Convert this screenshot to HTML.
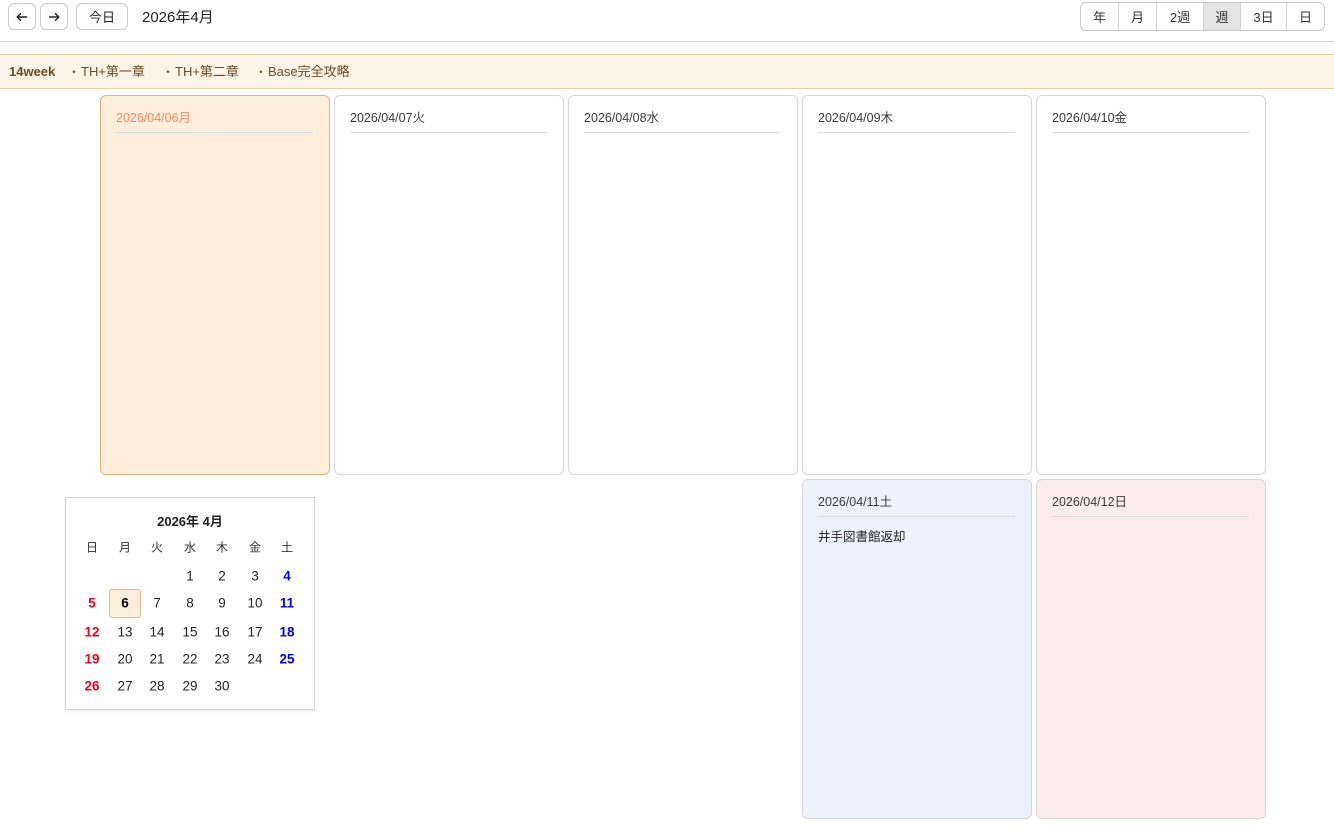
<!DOCTYPE html><html><head><meta charset="utf-8"><style>
*{box-sizing:border-box;margin:0;padding:0}
body{width:1334px;height:832px;background:#fff;font-family:"Liberation Sans","Noto Sans CJK JP",sans-serif;color:#333;position:relative;overflow:hidden}
.a{position:absolute}
.btn{position:absolute;top:3px;height:27px;border:1px solid #c8c8c8;border-radius:6px;background:#fff;font-size:13px;display:flex;align-items:center;justify-content:center;color:#222}
.seg{position:absolute;left:1080px;top:2px;width:245px;height:29px;border:1px solid #c8c8c8;border-radius:6px;display:flex;overflow:hidden}
.seg div{height:100%;display:flex;align-items:center;justify-content:center;font-size:13px;color:#333;border-right:1px solid #d0d0d0}
.seg div:last-child{border-right:none}
.card{position:absolute;width:230px;border:1px solid #d6d6d6;border-radius:6px;background:#fff}
.card .h{position:absolute;left:15px;top:12px;width:197px;height:25px;border-bottom:1px solid #dcdcdc;font-size:12.5px;color:#3a3a3a;line-height:20px}
.cal{position:absolute;left:65px;top:497px;width:250px;height:213px;border:1px solid #d4d4d4;background:#fff;box-shadow:0 1px 3px rgba(0,0,0,.08)}
.c{position:absolute;width:32px;text-align:center;font-size:13.5px;color:#222;transform:translateY(-50%)}
</style></head><body>
<div class="btn" style="left:8px;width:28px"><svg width="12" height="10" viewBox="0 0 12 10"><path d="M11 5H1.5M5 1.2L1.2 5L5 8.8" fill="none" stroke="#222" stroke-width="1.4"/></svg></div>
<div class="btn" style="left:40px;width:28px"><svg width="12" height="10" viewBox="0 0 12 10"><path d="M1 5h9.5M7 1.2L10.8 5L7 8.8" fill="none" stroke="#222" stroke-width="1.4"/></svg></div>
<div class="btn" style="left:76px;width:52px">今日</div>
<div class="a" style="left:142px;top:6px;font-size:15px;color:#222">2026年4月</div>
<div class="seg"><div style="width:38px">年</div><div style="width:38px">月</div><div style="width:47px">2週</div><div style="width:37px;background:#e4e4e4">週</div><div style="width:46px">3日</div><div style="flex:1">日</div></div>
<div class="a" style="left:0;top:41px;width:1334px;height:1px;background:#d8d8d8"></div>
<div class="a" style="left:0;top:54px;width:1334px;height:35px;background:#fdf4e8;border-top:1px solid #e8cfa0;border-bottom:1px solid #e8cfa0;font-size:13px;color:#6b4a26;line-height:33px">
<span class="a" style="left:9px;font-weight:bold">14week</span><span class="a" style="left:68px;font-family:'Noto Sans CJK JP',sans-serif;font-size:12px">・</span><span class="a" style="left:81px">TH+第一章</span><span class="a" style="left:162px;font-family:'Noto Sans CJK JP',sans-serif;font-size:12px">・</span><span class="a" style="left:175px">TH+第二章</span><span class="a" style="left:255px;font-family:'Noto Sans CJK JP',sans-serif;font-size:12px">・</span><span class="a" style="left:268px">Base完全攻略</span></div>
<div class="card" style="left:100px;top:95px;height:380px;background:#fdefdc;border-color:#e9b27a"><div class="h" style="color:#f28a5c">2026/04/06月</div></div>
<div class="card" style="left:334px;top:95px;height:380px"><div class="h">2026/04/07火</div></div>
<div class="card" style="left:568px;top:95px;height:380px"><div class="h">2026/04/08水</div></div>
<div class="card" style="left:802px;top:95px;height:380px"><div class="h">2026/04/09木</div></div>
<div class="card" style="left:1036px;top:95px;height:380px"><div class="h">2026/04/10金</div></div>
<div class="card" style="left:802px;top:479px;height:340px;background:#ecf3fd"><div class="h">2026/04/11土</div><div class="a" style="left:15px;top:46px;font-size:12.5px;color:#222">井手図書館返却</div></div>
<div class="card" style="left:1036px;top:479px;height:340px;background:#fdecec"><div class="h">2026/04/12日</div></div>
<div class="cal">
<div class="a" style="left:0;width:248px;top:13px;text-align:center;font-weight:bold;font-size:13px;color:#222">2026年 4月</div>
<div class="a" style="left:43px;top:91px;width:32px;height:29px;background:#fdeedc;border:1px solid #e6b98a;border-radius:3px"></div>
</div>
<div id="g"></div>
<script>
var xs=[92,125,157,190,222,255,287],ys=[576,603,632,659,686],h='';
'日月火水木金土'.split('').forEach(function(t,i){h+='<div class="c" style="left:'+(xs[i]-16)+'px;top:547px;font-size:12px;color:#333">'+t+'</div>';});
var d=1;for(var r=0;r<5;r++)for(var c=0;c<7;c++){if(r==0&&c<3)continue;if(d>30)break;
var col=c==0?'color:#f0001c;font-weight:bold':c==6?'color:#0000e6;font-weight:bold':(d==6?'font-weight:bold;color:#000':'');
h+='<div class="c" style="left:'+(xs[c]-16)+'px;top:'+ys[r]+'px;'+col+'">'+d+'</div>';d++;}
document.getElementById('g').innerHTML=h;
</script>
</body></html>
